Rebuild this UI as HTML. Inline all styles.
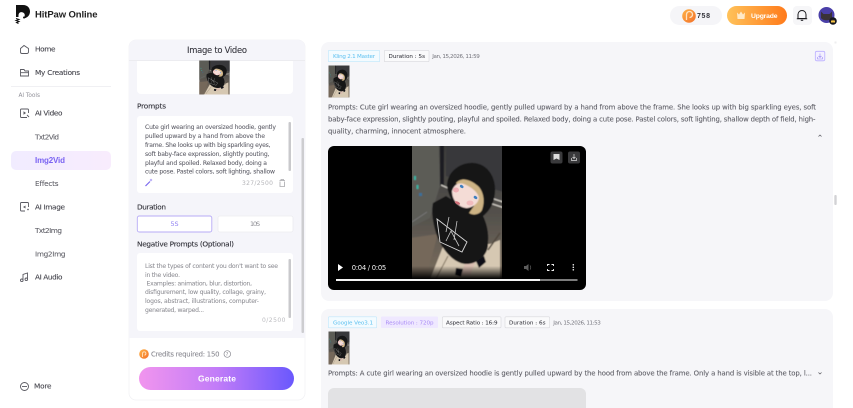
<!DOCTYPE html>
<html lang="en">
<head>
<meta charset="utf-8">
<title>HitPaw Online</title>
<style>
html,body{margin:0;padding:0;width:853px;height:408px;overflow:hidden;background:#fff}
svg{display:block;position:absolute;left:0;top:0;filter:blur(.35px)}
text{font-family:"DejaVu Sans","Liberation Sans",sans-serif;white-space:pre}
.b{font-family:"Liberation Sans",sans-serif;font-weight:700}
.nav{font-size:7.300px;fill:#44444c;stroke:#44444c;stroke-width:.1}
.sub{font-size:7.300px;fill:#5c5c64;stroke:#5c5c64;stroke-width:.06}
.lab{font-size:7.300px;fill:#2e2e36;stroke:#2e2e36;stroke-width:.1}
.p{font-size:6.100px;fill:#5c5c66;stroke:#5c5c66;stroke-width:.06}
.n{font-size:6.100px;fill:#8e8e94;stroke:#8e8e94;stroke-width:.05}
.r{font-size:6.900px;fill:#5c5c64;stroke:#5c5c64;stroke-width:.07}
.t{font-size:5.600px}
.ic{fill:none;stroke:#5a5a62;stroke-width:.9}
</style>
</head>
<body>
<svg width="853" height="408" viewBox="0 0 853 408" xmlns="http://www.w3.org/2000/svg">
<defs>
<filter id="soft" x="-5%" y="-5%" width="110%" height="110%"><feGaussianBlur stdDeviation=".55"/></filter>
<linearGradient id="gen" x1="0" x2="1" y1="0" y2="0"><stop offset="0" stop-color="#f195ee"/><stop offset=".5" stop-color="#c27cf8"/><stop offset="1" stop-color="#6a58fd"/></linearGradient>
<linearGradient id="upg" x1="0" x2="1" y1="0" y2="0"><stop offset="0" stop-color="#ffc25a"/><stop offset="1" stop-color="#ff7a1a"/></linearGradient>
<linearGradient id="coin" x1="0" x2="1" y1="0" y2="1"><stop offset="0" stop-color="#ffb347"/><stop offset="1" stop-color="#f2702a"/></linearGradient>
<linearGradient id="act" x1="0" x2="1" y1="0" y2="0"><stop offset="0" stop-color="#f1ecff"/><stop offset="1" stop-color="#f8ecfd"/></linearGradient>
<linearGradient id="wall" x1="0" x2="0" y1="0" y2="1"><stop offset="0" stop-color="#3c3c3a"/><stop offset=".5" stop-color="#55524d"/><stop offset=".75" stop-color="#6e6458"/><stop offset="1" stop-color="#7d705f"/></linearGradient>
<linearGradient id="shade" x1="0" x2="0" y1="0" y2="1"><stop offset="0" stop-color="#000" stop-opacity="0"/><stop offset="1" stop-color="#000"/></linearGradient>
<g id="photo">
  <g filter="url(#soft)">
  <rect x="410" y="144" width="94" height="148" fill="url(#wall)"/>
  <polygon points="410,144 439,144 440,186 430,218 410,228" fill="#5c5b56"/>
  <polygon points="446,144 504,144 504,192 446,176" fill="#38383a"/>
  <rect x="440" y="144" width="4" height="42" fill="#1e1e20"/>
  <polygon points="425,292 444,244 490,244 500,240 500,292" fill="#d6c8b2"/>
  <polygon points="410,292 410,238 438,234 422,292" fill="#75675a"/>
  <rect x="414" y="176" width="2" height="4" fill="#38b0a0"/>
  <rect x="416.500" y="185" width="2" height="4" fill="#38b0a0"/>
  <rect x="419" y="193" width="3" height="3" fill="#3a6f9a"/>
  <path d="M412 222L427 212" stroke="#777" stroke-width="1"/>
  <path d="M441 185L449 188.500M491 198L503 202M491 203.500L503 207.500" stroke="#cfcbc3" stroke-width="1.300"/>
  <path d="M488 250L500 233" stroke="#4f463c" stroke-width="1.500"/>
  <path d="M448 256L430 290" stroke="#8e806c" stroke-width="1.200"/>
  <path d="M466 260L461 276L470 276L476 260Z" fill="#d9bdb0"/>
  <path d="M456 268L463 269L461 277L455 275ZM476 261L484 256L486 262L479 268Z" fill="#111116"/>
  <path d="M433 203C431 212 433 224 437 236C443 252 456 265 468 264C479 263 489 254 488 242C489 234 487 224 483 216L462 206L446 196Z" fill="#121217"/>
  <path d="M447 186C447 172 460 162 474 163C488 164 496 178 495 192C494 206 487 214 480 218C466 220 450 206 447 186Z" fill="#141419"/>
  <path d="M456 183C461 177 470 179 478 186C484 192 485 202 482 210C480 214 474 216 469 213L474 206Z" fill="#cdb384"/>
  <path d="M452 191C454 185 458 182 464 184C471 187 478 192 479 198C478 204 472 208 466 208C458 207 452 200 452 191Z" fill="#f4dcd6"/>
  </g>
  <ellipse cx="461.700" cy="186.500" rx="2" ry="1.400" fill="#3f80c0" transform="rotate(35 461.700 186.500)"/>
  <ellipse cx="475.500" cy="197.500" rx="2" ry="1.400" fill="#3f80c0" transform="rotate(35 475.500 197.500)"/>
  <ellipse cx="456" cy="190" rx="3" ry="2.500" fill="#eea0aa" opacity=".75"/>
  <ellipse cx="470" cy="203" rx="3.500" ry="2.500" fill="#eea0aa" opacity=".55"/>
  <ellipse cx="457.500" cy="203" rx="2.800" ry="1.400" fill="#cf6f78" transform="rotate(25 457.500 203)"/>
  <path d="M437 219L467 242L462 252L440 242Z" fill="none" stroke="#d8d8d8" stroke-width=".9"/>
  <path d="M449 217L446 232M457 221L454 240M446 241L451 231L459 246" fill="none" stroke="#c8c8c8" stroke-width=".8"/>
</g>
</defs>

<rect width="853" height="408" fill="#fff"/>

<!-- Logo -->
<path d="M16 5H23C28 5 30 8.500 30 11.500C30 15.500 27 18 23.500 18.500C25 16.500 25.500 13.500 23 12.500C20.500 11.500 18.500 13 18.500 15.500V17H16Z" fill="#111"/>
<circle cx="24" cy="17.500" r="1" fill="#111"/>
<path d="M16 18.500l3 1-3 1 3 1-2.500 1 2 1" fill="none" stroke="#111" stroke-width="1"/>
<text class="b" x="35" y="17.500" font-size="9.500" fill="#222" textLength="62.500">HitPaw Online</text>

<!-- Top bar -->
<rect x="670" y="6" width="52" height="19" rx="9.500" fill="#f5f5f8"/>
<circle cx="689" cy="16" r="6.800" fill="url(#coin)"/>
<path d="M686.500 20V14.500A3 3 0 1 1 689.500 17.500" fill="none" stroke="#ffe2c0" stroke-width="1.300"/>
<text class="b" x="697" y="18" font-size="7" fill="#33333a" textLength="13">758</text>
<rect x="727" y="6" width="60" height="19" rx="9.500" fill="url(#upg)"/>
<path d="M737 12.500L739 14.500L741 11.500L743 14.500L745 12.500L744.500 19H737.500Z" fill="#ffe9c8"/>
<text class="b" x="751" y="18" font-size="6.800" fill="#fff" textLength="26.500">Upgrade</text>
<rect x="793" y="6" width="19" height="19" rx="4" fill="#f6f6f8"/>
<path d="M798 18.500V14.500C798 12 800 10.500 802 10.500C804 10.500 806 12 806 14.500V18.500ZM796.800 18.700H807.200" fill="none" stroke="#1a1a1e" stroke-width="1"/>
<path d="M800.800 20.300H803.200" stroke="#1a1a1e" stroke-width="1"/>
<circle cx="826.500" cy="15" r="8" fill="#4a3fa8"/>
<path d="M821 11.500L823.500 14H829.500L832 11.500L832 18C830 21 823 21 821 18Z" fill="#3a3238"/>
<circle cx="833" cy="21" r="3.800" fill="#16161e"/>
<path d="M831 22.500V20L832 21L833 19.600L834 21L835 20V22.500Z" fill="#f6c445"/>

<!-- Sidebar -->
<path class="ic" d="M20.500 48.500L24 45.500L28.500 48.500V52C28.500 53 27.500 53.500 27 53.500H22C21 53.500 20.500 53 20.500 52Z"/>
<text class="nav" x="35" y="51.700" textLength="20.500">Home</text>
<path class="ic" d="M20.500 76V69.500H24L25 71H28.500V76ZM20.500 72.700H28.500"/>
<text class="nav" x="35" y="75.200" textLength="45">My Creations</text>
<rect x="11" y="86" width="100" height="1" fill="#f0f0f3"/>
<text x="18.500" y="97" font-size="5.800" fill="#92929a" textLength="21.500">AI Tools</text>
<path class="ic" d="M27 117.500H21.500C20.800 117.500 20.500 117 20.500 116.500V110C20.500 109.500 21 109 21.500 109H27.500C28 109 28.500 109.500 28.500 110V113"/>
<path d="M23.500 111.200L26 113L23.500 114.800Z" fill="#5a5a62"/>
<path class="ic" d="M27 115L29 117"/>
<text class="nav" x="35" y="115.700" textLength="27.500">AI Video</text>
<text class="sub" x="35" y="139.700" textLength="24">Txt2Vid</text>
<rect x="11" y="151" width="100" height="19" rx="5" fill="url(#act)"/>
<text class="b" x="35" y="163" font-size="8" fill="#7a63f2" textLength="30">Img2Vid</text>
<text class="sub" x="35" y="186.200" textLength="23.500">Effects</text>
<path class="ic" d="M25 211H21.500C20.800 211 20.500 210.500 20.500 210V203.500C20.500 203 21 202.500 21.500 202.500H27.500C28 202.500 28.500 203 28.500 203.500V207"/>
<path d="M23 207L25.500 205.500V208.500ZM27 209.500L28 208.500L29 209.500L28 210.500Z" fill="#5a5a62"/>
<text class="nav" x="35" y="209.700" textLength="30">AI Image</text>
<text class="sub" x="35" y="233.200" textLength="27">Txt2Img</text>
<text class="sub" x="35" y="256.700" textLength="30.500">Img2Img</text>
<path class="ic" d="M23 280V274.500L27.500 273V279"/>
<circle cx="21.800" cy="280.300" r="1.300" fill="none" stroke="#5a5a62" stroke-width=".9"/>
<circle cx="26.300" cy="279.300" r="1.300" fill="none" stroke="#5a5a62" stroke-width=".9"/>
<text class="nav" x="35" y="279.700" textLength="27.500">AI Audio</text>
<circle cx="24.500" cy="386.500" r="4" class="ic"/>
<path d="M22 386.500H27" stroke="#5a5a62" stroke-width=".9"/>
<text class="nav" x="34" y="388.700" textLength="17.500">More</text>

<!-- Panel -->
<rect x="129" y="40" width="176" height="360" rx="7" fill="#fff" stroke="#f2f2f5" stroke-width=".8"/>
<path d="M129 338V47a7 7 0 0 1 7-7h162a7 7 0 0 1 7 7V338Z" fill="#f5f5fa"/>
<rect x="129" y="60" width="176" height=".8" fill="#e9e9ee"/>
<text x="187" y="53.200" font-size="8.400" fill="#33333b" stroke="#33333b" stroke-width=".08" textLength="60">Image to Video</text>
<path d="M137 61H293V90a4 4 0 0 1-4 4H141a4 4 0 0 1-4-4Z" fill="#fff"/>
<g transform="translate(200 61) scale(.3222 .2292) translate(-412 -146)"><use href="#photo"/></g>
<text class="lab" x="137" y="108.700" textLength="29">Prompts</text>
<rect x="137" y="116" width="156" height="77" rx="3" fill="#fff"/>
<text class="p" x="145" y="129.200" textLength="131">Cute girl wearing an oversized hoodie, gently</text>
<text class="p" x="145" y="138.200" textLength="120">pulled upward by a hand from above the</text>
<text class="p" x="145" y="147.200" textLength="125.500">frame. She looks up with big sparkling eyes,</text>
<text class="p" x="145" y="156.200" textLength="124.500">soft baby-face expression, slightly pouting,</text>
<text class="p" x="145" y="165.200" textLength="122">playful and spoiled. Relaxed body, doing a</text>
<text class="p" x="145" y="173.700" textLength="130">cute pose. Pastel colors, soft lighting, shallow</text>
<rect x="288.500" y="122" width="2.500" height="49" rx="1" fill="#c9c9cc"/>
<path d="M145.500 186L150 181.500" stroke="#7b68ee" stroke-width="1.200"/>
<path d="M151 178.500l.5 1 1 .5-1 .5-.5 1-.5-1-1-.5 1-.5z" fill="#9b8af5"/>
<text x="242" y="185.200" font-size="6" fill="#b4b4b8" textLength="31">327/2500</text>
<path d="M279.500 180.500H285M280 181.500V186.500H284.500V181.500M281 180.500V179.500H283.500V180.500" fill="none" stroke="#a8a8ac" stroke-width=".8"/>

<text class="lab" x="137" y="209.700" textLength="29">Duration</text>
<rect x="137.300" y="216" width="74.500" height="16" rx="2" fill="#fff" stroke="#b7abf6" stroke-width=".9"/>
<text x="170.500" y="226.200" font-size="6.400" fill="#8f80f2" textLength="8">5S</text>
<rect x="218" y="216" width="75" height="16" rx="2" fill="#fff" stroke="#ececf0" stroke-width=".8"/>
<text x="250" y="226.200" font-size="6.400" fill="#8c8c92" textLength="10">10S</text>

<text class="lab" x="137" y="246.700" textLength="97">Negative Prompts (Optional)</text>
<rect x="137" y="253" width="156" height="78" rx="3" fill="#fff"/>
<text class="n" x="145" y="268.200" textLength="133">List the types of content you don't want to see</text>
<text class="n" x="145" y="277.200" textLength="35">in the video.</text>
<text class="n" x="146.500" y="285.700" textLength="105.500">Examples: animation, blur, distortion,</text>
<text class="n" x="145" y="294.200" textLength="121">disfigurement, low quality, collage, grainy,</text>
<text class="n" x="145" y="303.200" textLength="114">logos, abstract, illustrations, computer-</text>
<text class="n" x="145" y="312.200" textLength="59">generated, warped...</text>
<rect x="288.500" y="259" width="2.500" height="59" rx="1" fill="#c9c9cc"/>
<text x="262" y="322.200" font-size="6" fill="#bcbcc0" textLength="23.500">0/2500</text>
<rect x="301.500" y="138" width="2.500" height="195" rx="1" fill="#cdcdd0"/>

<circle cx="144" cy="354" r="4.800" fill="url(#coin)"/>
<path d="M142.500 357V353.500A1.700 1.700 0 1 1 144.500 355.200" fill="none" stroke="#ffe2c0" stroke-width=".9"/>
<text x="151" y="356.500" font-size="6.900" fill="#84848c" stroke="#84848c" stroke-width=".05" textLength="68.500">Credits required: 150</text>
<circle cx="227.300" cy="354" r="3.300" fill="none" stroke="#8a8a92" stroke-width=".7"/>
<text x="225.800" y="356" font-size="4.800" fill="#8a8a92">?</text>
<rect x="139" y="367" width="155" height="23" rx="11.500" fill="url(#gen)"/>
<text class="b" x="198" y="381.500" font-size="8.500" fill="#fff" textLength="38">Generate</text>

<!-- Card 1 -->
<rect x="321" y="42" width="512" height="259" rx="8" fill="#f6f6f9"/>
<rect x="328.300" y="50.300" width="51.400" height="11.400" rx="1" fill="#f3fbff" stroke="#bfe6fa" stroke-width=".6"/>
<text class="t" x="333" y="58.100" fill="#5cc0f0" textLength="42">Kling 2.1 Master</text>
<rect x="384.300" y="50.300" width="44.700" height="11.400" rx="1" fill="#fafafb" stroke="#d8d8dc" stroke-width=".6"/>
<text class="t" x="388.500" y="58.100" fill="#3c3c44" stroke="#3c3c44" stroke-width=".06" textLength="36.500">Duration : 5s</text>
<text class="t" x="432.300" y="58.100" fill="#74747c" textLength="47.500">Jan, 15,2026, 11:59</text>
<rect x="815.300" y="51.300" width="9.500" height="9.500" rx="1.500" fill="#f3f0ff" stroke="#baaeff" stroke-width=".8"/>
<path d="M820 53.500V57M818.500 56L820 57.500L821.500 56M817.500 57V59H822.500V57" fill="none" stroke="#9a8af5" stroke-width=".6"/>
<g transform="translate(329 66) scale(.2222 .2153) translate(-412 -146)"><use href="#photo"/></g>
<text class="r" x="328" y="109.700" textLength="488">Prompts: Cute girl wearing an oversized hoodie, gently pulled upward by a hand from above the frame. She looks up with big sparkling eyes, soft</text>
<text class="r" x="328" y="121.700" textLength="487.500">baby-face expression, slightly pouting, playful and spoiled. Relaxed body, doing a cute pose. Pastel colors, soft lighting, shallow depth of field, high-</text>
<text class="r" x="328" y="133.700" textLength="138">quality, charming, innocent atmosphere.</text>
<path d="M818.500 136.500L820 135L821.500 136.500" fill="none" stroke="#55555d" stroke-width=".7"/>

<!-- Video -->
<clipPath id="vc"><rect x="328" y="146" width="258" height="144" rx="6"/></clipPath>
<g clip-path="url(#vc)">
  <rect x="328" y="146" width="258" height="144" fill="#000"/>
  <clipPath id="vi"><rect x="412" y="146" width="90" height="144"/></clipPath>
  <g clip-path="url(#vi)"><use href="#photo"/></g>
  <rect x="412" y="266" width="90" height="13" fill="url(#shade)"/>
  <rect x="412" y="279" width="90" height="11" fill="#000"/>
</g>
<rect x="550.500" y="151.500" width="12" height="12" rx="2" fill="#3a3a3c"/>
<path d="M553.500 154H559.500V160L556.500 158.500L553.500 160Z" fill="#ddd"/>
<rect x="568" y="151.500" width="12" height="12" rx="2" fill="#3a3a3c"/>
<path d="M574 154V158.500M572.500 157L574 158.500L575.500 157M571.500 158V160.500H576.500V158" fill="none" stroke="#ddd" stroke-width=".7"/>
<path d="M338 264L343 267.500L338 271Z" fill="#fff"/>
<text x="351.700" y="270" font-size="6.800" fill="#f2f2f2" textLength="34.500">0:04 / 0:05</text>
<path d="M524 266H526L528.500 264V271L526 269H524Z" fill="#5c5c5c"/>
<path d="M530 265.500C531 266.500 531 268.500 530 269.500" fill="none" stroke="#5c5c5c" stroke-width=".7"/>
<path d="M547.500 266V264.500H549.500M551.500 264.500H553.500V266M553.500 269V270.500H551.500M549.500 270.500H547.500V269" fill="none" stroke="#f2f2f2" stroke-width=".9"/>
<circle cx="573.300" cy="264.800" r=".8" fill="#f2f2f2"/>
<circle cx="573.300" cy="267.300" r=".8" fill="#f2f2f2"/>
<circle cx="573.300" cy="269.800" r=".8" fill="#f2f2f2"/>
<rect x="336" y="279" width="241.500" height="2" fill="#7c7c7c"/>
<rect x="336" y="279" width="204" height="2" fill="#f4f4f4"/>

<!-- Card 2 -->
<rect x="321" y="309" width="512" height="110" rx="8" fill="#f6f6f9"/>
<rect x="328.300" y="316.800" width="48.400" height="11" rx="1" fill="#f3fbff" stroke="#bfe6fa" stroke-width=".6"/>
<text class="t" x="333" y="324.400" fill="#5cc0f0" textLength="40">Google Veo3.1</text>
<rect x="381" y="316.500" width="57" height="11.500" rx="1" fill="#efe8ff"/>
<text class="t" x="385.500" y="324.400" fill="#a98bf5" textLength="48">Resolution : 720p</text>
<rect x="442.300" y="316.800" width="58.700" height="11" rx="1" fill="#fafafb" stroke="#d8d8dc" stroke-width=".6"/>
<text class="t" x="446" y="324.400" fill="#3c3c44" stroke="#3c3c44" stroke-width=".06" textLength="51.500">Aspect Ratio : 16:9</text>
<rect x="505" y="316.800" width="44.700" height="11" rx="1" fill="#fafafb" stroke="#d8d8dc" stroke-width=".6"/>
<text class="t" x="509" y="324.400" fill="#3c3c44" stroke="#3c3c44" stroke-width=".06" textLength="36.500">Duration : 6s</text>
<text class="t" x="553.300" y="324.400" fill="#74747c" textLength="47.500">Jan, 15,2026, 11:53</text>
<g transform="translate(329 332) scale(.2222 .2222) translate(-412 -146)"><use href="#photo"/></g>
<text class="r" x="328" y="375.700" textLength="484">Prompts: A cute girl wearing an oversized hoodie is gently pulled upward by the hood from above the frame. Only a hand is visible at the top, l...</text>
<path d="M818.500 372.500L820 374L821.500 372.500" fill="none" stroke="#55555d" stroke-width=".7"/>
<path d="M328 408V394a6 6 0 0 1 6-6H580a6 6 0 0 1 6 6V408Z" fill="#e2e2e4"/>

<!-- Page scrollbar -->
<rect x="834.300" y="195" width="2.400" height="10" rx="1" fill="#d2d2d5"/>
<rect x="834.500" y="41.500" width="2" height="2" fill="#eeeeef"/>
</svg>
</body>
</html>
